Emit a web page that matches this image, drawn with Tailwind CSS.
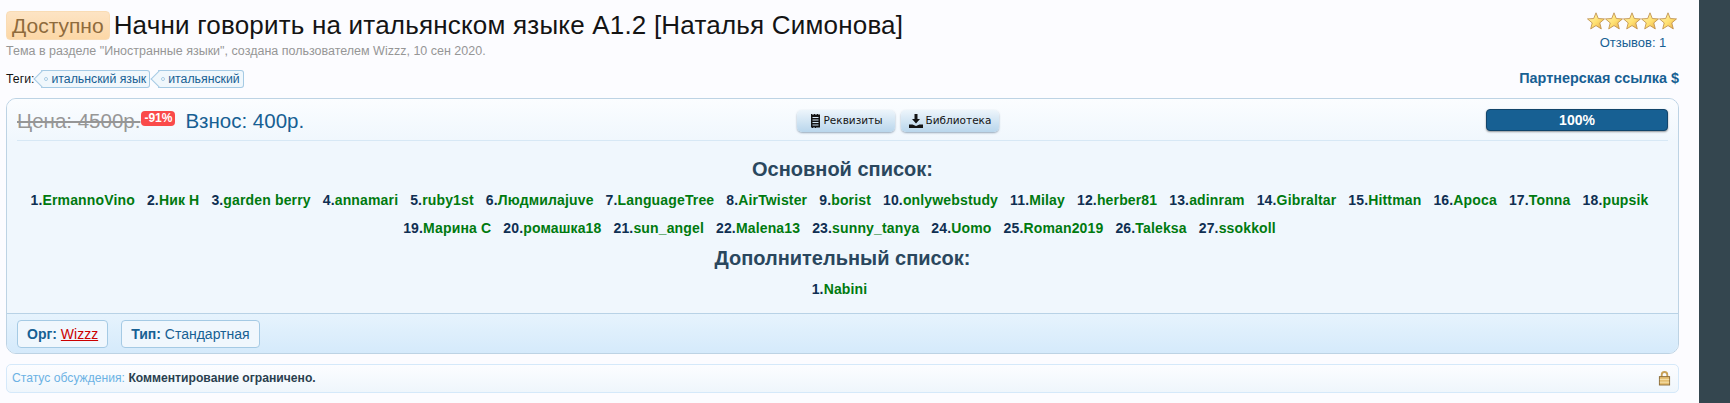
<!DOCTYPE html>
<html lang="ru">
<head>
    <meta charset="UTF-8">
    <title>Начни говорить на итальянском языке A1.2</title>
    <script src="https://cdn.jsdelivr.net/npm/@tailwindcss/browser@4"></script>
</head>
<body class="bg-[#34464f] font-['Liberation_Sans',Arial,sans-serif] overflow-hidden">
<div class="w-[1699px] h-[403px] bg-[#fcfcff] px-[6px] overflow-hidden">

    <!-- title -->
    <div class="flex justify-between w-[1673px] h-[98px]">
        <div>
            <h1 class="flex items-center h-[40px] pt-[11px] text-[26px] tracking-[.2px] text-[#141414] whitespace-nowrap">
                <span class="h-[29px] px-[5px] mr-[4px] text-[21px] tracking-normal leading-[28px] text-[#8f6b3c] bg-gradient-to-b from-[#fde4c4] to-[#fcd7a6] border border-[#f9dcb5] rounded-[4px]">Доступно</span>
                Начни говорить на итальянском языке A1.2 [Наталья Симонова]
            </h1>
            <p class="mt-[3px] text-[12.5px] leading-[16px] text-[#969696]">Тема в разделе "Иностранные языки", создана пользователем Wizzz, 10 сен 2020.</p>
            <div class="flex items-center mt-[11px] h-[18px] text-[12.3px] text-[#141414]">
                <span class="mr-[4px]">Теги:</span>
                <a class="relative h-[18px] ml-[3px] mr-[2px] pl-[10px] pr-[3px] leading-[16px] text-[#176093] bg-[#f0f7fc] border border-[#a5cae4] rounded-r-[3px] border-l-0">
                    <span class="absolute left-[-5px] top-[2px] w-[12px] h-[12px] rotate-45 bg-[#f0f7fc] border-l border-b border-[#a5cae4]"></span>
                    <span class="absolute left-[3px] top-[6px] w-[4px] h-[4px] rounded-full border border-[#a5cae4] bg-white"></span>
                    <span class="relative">итальнский язык</span>
                </a>
                <a class="relative h-[18px] ml-[6px] pl-[10px] pr-[3px] leading-[16px] text-[#176093] bg-[#f0f7fc] border border-[#a5cae4] rounded-r-[3px] border-l-0">
                    <span class="absolute left-[-5px] top-[2px] w-[12px] h-[12px] rotate-45 bg-[#f0f7fc] border-l border-b border-[#a5cae4]"></span>
                    <span class="absolute left-[3px] top-[6px] w-[4px] h-[4px] rounded-full border border-[#a5cae4] bg-white"></span>
                    <span class="relative">итальянский</span>
                </a>
            </div>
        </div>
        <div class="flex flex-col items-end pt-[12px]">
            <div class="flex flex-col items-center w-[92px]">
                <div class="flex h-[18px] w-[92px]">
                    <svg class="w-[18px] h-[18px]" viewBox="0 0 18 18">
                        <defs><linearGradient id="star" x1="0" y1="0" x2="1" y2="1"><stop offset="0" stop-color="#fff6b8"/><stop offset=".55" stop-color="#ffe070"/><stop offset="1" stop-color="#e3a347"/></linearGradient></defs>
                        <path d="M9 .8l2.300 5.700 6.200.4-4.700 4 1.500 6L9 13.600 3.700 16.900l1.500-6-4.700-4 6.200-.4z" fill="url(#star)" stroke="#bb8a45" stroke-width=".8"/>
                    </svg>
                    <svg class="w-[18px] h-[18px]" viewBox="0 0 18 18"><path d="M9 .8l2.300 5.700 6.200.4-4.700 4 1.500 6L9 13.600 3.700 16.900l1.500-6-4.700-4 6.200-.4z" fill="url(#star)" stroke="#bb8a45" stroke-width=".8"/></svg>
                    <svg class="w-[18px] h-[18px]" viewBox="0 0 18 18"><path d="M9 .8l2.300 5.700 6.200.4-4.700 4 1.500 6L9 13.600 3.700 16.900l1.500-6-4.700-4 6.200-.4z" fill="url(#star)" stroke="#bb8a45" stroke-width=".8"/></svg>
                    <svg class="w-[18px] h-[18px]" viewBox="0 0 18 18"><path d="M9 .8l2.300 5.700 6.200.4-4.700 4 1.500 6L9 13.600 3.700 16.900l1.500-6-4.700-4 6.200-.4z" fill="url(#star)" stroke="#bb8a45" stroke-width=".8"/></svg>
                    <svg class="w-[18px] h-[18px]" viewBox="0 0 18 18"><path d="M9 .8l2.300 5.700 6.200.4-4.700 4 1.500 6L9 13.600 3.700 16.900l1.500-6-4.700-4 6.200-.4z" fill="url(#star)" stroke="#bb8a45" stroke-width=".8"/></svg>
                </div>
                <span class="mt-[5px] text-[13px] leading-[16px] text-[#176093] whitespace-nowrap">Отзывов: 1</span>
            </div>
            <a class="mt-[18px] text-[14.4px] leading-[18px] font-bold text-[#176093] whitespace-nowrap">Партнерская ссылка $</a>
        </div>
    </div>

    <!-- main panel -->
    <div class="w-[1673px] h-[256px] border border-[#bdd3e4] rounded-[10px] bg-[#f0f7fd] overflow-hidden">
        <div class="h-[42px] bg-gradient-to-b from-[#fbfdff] to-[#f0f7fd]">
            <div class="relative flex items-center justify-between h-[42px] mx-[10px] border-b border-[#d7e8f5]">
                <div class="flex items-center mt-[4px] whitespace-nowrap">
                    <span class="text-[20.5px] text-[#969696] line-through">Цена: 4500р.</span>
                    <span class="mb-[7px] ml-[1px] px-[3px] h-[15px] leading-[15px] text-[12px] font-bold text-white bg-[#fa4a4a] rounded-[4px]">-91%</span>
                    <span class="ml-[10px] text-[20.5px] text-[#176093]">Взнос: 400р.</span>
                </div>
                <div class="absolute left-[780px] top-[11px] flex gap-[6px] font-['DejaVu_Sans',sans-serif] text-[10.5px] text-[#141414]">
                    <a class="flex items-center justify-center gap-[3px] w-[98px] h-[22px] rounded-[5px] bg-gradient-to-b from-[#edf5fb] to-[#b9d6ec] shadow-[0_1px_2px_rgba(60,90,120,.5)]">
                        <svg class="w-[11px] h-[14px]" viewBox="0 0 11 14"><path fill="#141414" d="M1 0h1l1 1 1-1h1l1 1 1-1h1l1 1 1-1v14l-1-1-1 1H8l-1-1-1 1H5l-1-1-1 1H2l-1-1V0zm1.500 3v1h6V3zm0 2.500v1h6v-1zm0 2.500v1h6V8zm0 2.500v1h6v-1z" fill-rule="evenodd"/></svg>
                        Реквизиты
                    </a>
                    <a class="flex items-center justify-center gap-[3px] w-[98px] h-[22px] rounded-[5px] bg-gradient-to-b from-[#edf5fb] to-[#b9d6ec] shadow-[0_1px_2px_rgba(60,90,120,.5)]">
                        <svg class="w-[14px] h-[14px]" viewBox="0 0 14 14"><path fill="#141414" d="M5.500 0h3v5H11L7 9.500 3 5h2.500zM0 10.500h3.500L7 12l3.500-1.500H14V14H0z"/></svg>
                        Библиотека
                    </a>
                </div>
                <div class="w-[182px] h-[22px] mt-[1px] leading-[21px] text-center text-[14px] font-bold text-white bg-[#176093] border border-[#12456b] rounded-[4px] shadow-[0_1px_2px_rgba(0,0,0,.4)]">100%</div>
            </div>
        </div>

        <div class="h-[172px] pt-[14px] text-center">
            <h3 class="h-[28px] leading-[28px] text-[20px] font-bold text-[#2a475e]">Основной список:</h3>
            <div class="mt-[3px] pr-[6px] text-[14px] tracking-[.15px] font-bold leading-[28px] text-[#0f2f52] whitespace-nowrap">
                <div class="flex justify-center gap-[12px]">
                    <span>1.<a class="text-[#007a0f]">ErmannoVino</a></span>
                    <span>2.<a class="text-[#007a0f]">Ник Н</a></span>
                    <span>3.<a class="text-[#007a0f]">garden berry</a></span>
                    <span>4.<a class="text-[#007a0f]">annamari</a></span>
                    <span>5.<a class="text-[#007a0f]">ruby1st</a></span>
                    <span>6.<a class="text-[#007a0f]">Людмилаjuve</a></span>
                    <span>7.<a class="text-[#007a0f]">LanguageTree</a></span>
                    <span>8.<a class="text-[#007a0f]">AirTwister</a></span>
                    <span>9.<a class="text-[#007a0f]">borist</a></span>
                    <span>10.<a class="text-[#007a0f]">onlywebstudy</a></span>
                    <span>11.<a class="text-[#007a0f]">Milay</a></span>
                    <span>12.<a class="text-[#007a0f]">herber81</a></span>
                    <span>13.<a class="text-[#007a0f]">adinram</a></span>
                    <span>14.<a class="text-[#007a0f]">Gibraltar</a></span>
                    <span>15.<a class="text-[#007a0f]">Hittman</a></span>
                    <span>16.<a class="text-[#007a0f]">Apoca</a></span>
                    <span>17.<a class="text-[#007a0f]">Tonna</a></span>
                    <span>18.<a class="text-[#007a0f]">pupsik</a></span>
                </div>
                <div class="flex justify-center gap-[12px]">
                    <span>19.<a class="text-[#007a0f]">Марина С</a></span>
                    <span>20.<a class="text-[#007a0f]">ромашка18</a></span>
                    <span>21.<a class="text-[#007a0f]">sun_angel</a></span>
                    <span>22.<a class="text-[#007a0f]">Malena13</a></span>
                    <span>23.<a class="text-[#007a0f]">sunny_tanya</a></span>
                    <span>24.<a class="text-[#007a0f]">Uomo</a></span>
                    <span>25.<a class="text-[#007a0f]">Roman2019</a></span>
                    <span>26.<a class="text-[#007a0f]">Taleksa</a></span>
                    <span>27.<a class="text-[#007a0f]">ssokkoll</a></span>
                </div>
            </div>
            <h3 class="mt-[2px] h-[28px] leading-[28px] text-[20px] font-bold text-[#2a475e]">Дополнительный список:</h3>
            <div class="mt-[3px] pr-[6px] text-[14px] tracking-[.15px] font-bold leading-[28px] text-[#0f2f52]">1.<a class="text-[#007a0f]">Nabini</a></div>
        </div>

        <div class="flex items-center gap-[13px] h-[40px] pl-[10px] border-t border-[#b8d2e6] bg-gradient-to-b from-[#e6f3fd] to-[#d5eafb] text-[14px]">
            <div class="h-[28px] leading-[26px] px-[9px] text-[#176093] bg-[#f0f7fd] border border-[#a5cae4] rounded-[4px]"><b>Орг:</b> <a class="text-[#cc0000] underline">Wizzz</a></div>
            <div class="h-[28px] leading-[26px] px-[9px] text-[#176093] bg-[#f0f7fd] border border-[#a5cae4] rounded-[4px]"><b>Тип:</b> Стандартная</div>
        </div>
    </div>

    <!-- status -->
    <div class="flex items-center justify-between w-[1673px] h-[29px] mt-[10px] pl-[5px] pr-[7px] text-[12.15px] bg-gradient-to-b from-[#fcfdff] to-[#eff6fc] border border-[#d5e9fa] rounded-[5px]">
        <p><span class="text-[#6cb2e4]">Статус обсуждения:</span> <b class="text-[#2a3f4f]">Комментирование ограничено.</b></p>
        <svg class="w-[13px] h-[15px]" viewBox="0 0 14 16"><path d="M4 7V4a3 3 0 0 1 6 0v3" fill="none" stroke="#c9a257" stroke-width="2"/><rect x="1.500" y="6" width="11" height="9" fill="#e5bf72" stroke="#8a6a35"/><path d="M2 9h10M2 12h10" stroke="#f7e3b0"/></svg>
    </div>
</div>
</body>
</html>
